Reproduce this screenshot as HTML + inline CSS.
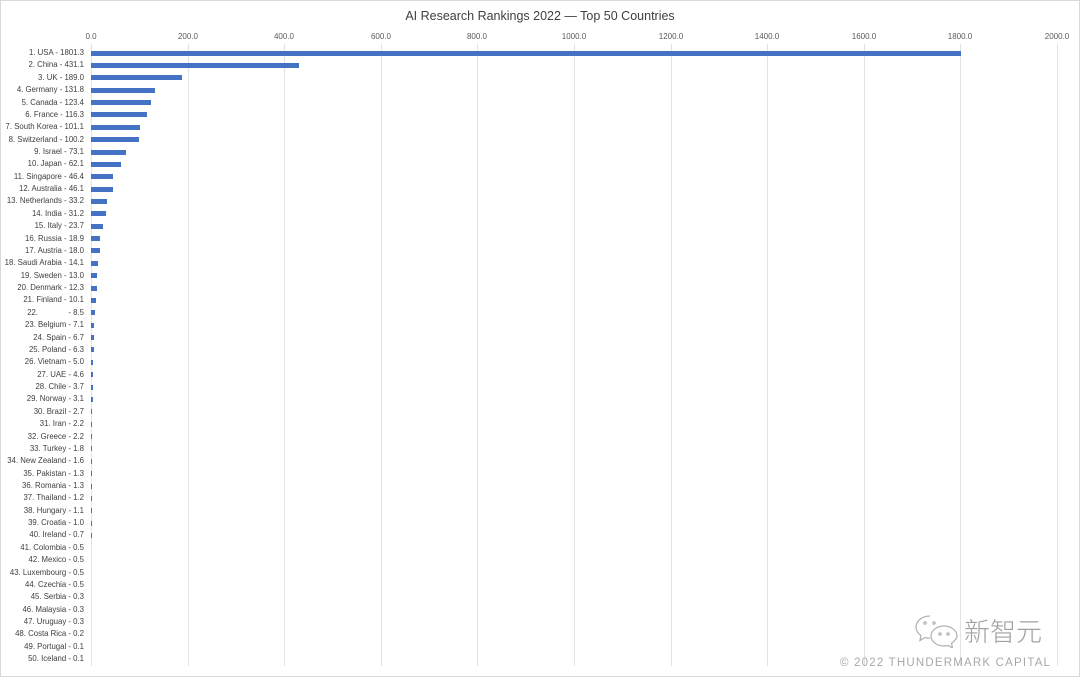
<!DOCTYPE html>
<html><head><meta charset="utf-8"><style>
body{margin:0;width:1080px;height:677px;background:#fff;position:relative;overflow:hidden;font-family:"Liberation Sans",sans-serif;}
.frame{position:absolute;left:0;top:0;width:1078px;height:675px;border:1px solid #d9d9d9;}
.t{position:absolute;top:9px;left:0;width:1080px;text-align:center;font-size:12.5px;color:#404040;}
.g{position:absolute;top:44px;height:622px;width:1px;background:#e3e3e3;}
.ax{position:absolute;top:32px;font-size:8px;color:#595959;width:40px;margin-left:-20px;text-align:center;}
.r{position:absolute;left:0;height:12px;width:1080px;}
.r span{position:absolute;right:996px;top:0;font-size:7.8px;line-height:12px;color:#404040;white-space:nowrap;}
.r i{position:absolute;left:91px;top:3.5px;height:5px;background:#4472c4;}
.wm{position:absolute;left:964px;top:612px;font-family:"Noto Sans CJK SC",sans-serif;font-size:26px;color:#a0a0a0;font-weight:300;}
.cp{position:absolute;left:840px;top:657px;font-size:11.5px;color:#a8a8a8;letter-spacing:1.2px;}
</style></head><body>
<div class="frame"></div>
<div class="t">AI Research Rankings 2022 — Top 50 Countries</div>
<div class="g" style="left:91px"></div><div class="g" style="left:188px"></div><div class="g" style="left:284px"></div><div class="g" style="left:381px"></div><div class="g" style="left:477px"></div><div class="g" style="left:574px"></div><div class="g" style="left:671px"></div><div class="g" style="left:767px"></div><div class="g" style="left:864px"></div><div class="g" style="left:960px"></div><div class="g" style="left:1057px"></div>
<div class="ax" style="left:91px">0.0</div><div class="ax" style="left:188px">200.0</div><div class="ax" style="left:284px">400.0</div><div class="ax" style="left:381px">600.0</div><div class="ax" style="left:477px">800.0</div><div class="ax" style="left:574px">1000.0</div><div class="ax" style="left:671px">1200.0</div><div class="ax" style="left:767px">1400.0</div><div class="ax" style="left:864px">1600.0</div><div class="ax" style="left:960px">1800.0</div><div class="ax" style="left:1057px">2000.0</div>
<div class="r" style="top:47px"><span>1. USA - 1801.3</span><i style="width:870px"></i></div>
<div class="r" style="top:59.4px"><span>2. China - 431.1</span><i style="width:208px"></i></div>
<div class="r" style="top:71.7px"><span>3. UK - 189.0</span><i style="width:91px"></i></div>
<div class="r" style="top:84.1px"><span>4. Germany - 131.8</span><i style="width:64px"></i></div>
<div class="r" style="top:96.5px"><span>5. Canada - 123.4</span><i style="width:60px"></i></div>
<div class="r" style="top:108.9px"><span>6. France - 116.3</span><i style="width:56px"></i></div>
<div class="r" style="top:121.2px"><span>7. South Korea - 101.1</span><i style="width:49px"></i></div>
<div class="r" style="top:133.6px"><span>8. Switzerland - 100.2</span><i style="width:48px"></i></div>
<div class="r" style="top:146px"><span>9. Israel - 73.1</span><i style="width:35px"></i></div>
<div class="r" style="top:158.3px"><span>10. Japan - 62.1</span><i style="width:30px"></i></div>
<div class="r" style="top:170.7px"><span>11. Singapore - 46.4</span><i style="width:22px"></i></div>
<div class="r" style="top:183.1px"><span>12. Australia - 46.1</span><i style="width:22px"></i></div>
<div class="r" style="top:195.4px"><span>13. Netherlands - 33.2</span><i style="width:16px"></i></div>
<div class="r" style="top:207.8px"><span>14. India - 31.2</span><i style="width:15px"></i></div>
<div class="r" style="top:220.2px"><span>15. Italy - 23.7</span><i style="width:11.5px"></i></div>
<div class="r" style="top:232.6px"><span>16. Russia - 18.9</span><i style="width:9px"></i></div>
<div class="r" style="top:244.9px"><span>17. Austria - 18.0</span><i style="width:8.7px"></i></div>
<div class="r" style="top:257.3px"><span>18. Saudi Arabia - 14.1</span><i style="width:6.8px"></i></div>
<div class="r" style="top:269.7px"><span>19. Sweden - 13.0</span><i style="width:6.3px"></i></div>
<div class="r" style="top:282px"><span>20. Denmark - 12.3</span><i style="width:6px"></i></div>
<div class="r" style="top:294.4px"><span>21. Finland - 10.1</span><i style="width:5px"></i></div>
<div class="r" style="top:306.8px"><span>22. &nbsp;&nbsp;&nbsp;&nbsp;&nbsp;&nbsp;&nbsp;&nbsp;&nbsp;&nbsp;&nbsp;&nbsp;&nbsp;- 8.5</span><i style="width:4px"></i></div>
<div class="r" style="top:319.1px"><span>23. Belgium - 7.1</span><i style="width:3.4px"></i></div>
<div class="r" style="top:331.5px"><span>24. Spain - 6.7</span><i style="width:3.2px"></i></div>
<div class="r" style="top:343.9px"><span>25. Poland - 6.3</span><i style="width:3px"></i></div>
<div class="r" style="top:356.3px"><span>26. Vietnam - 5.0</span><i style="width:2.4px"></i></div>
<div class="r" style="top:368.6px"><span>27. UAE - 4.6</span><i style="width:2.2px"></i></div>
<div class="r" style="top:381px"><span>28. Chile - 3.7</span><i style="width:1.8px"></i></div>
<div class="r" style="top:393.4px"><span>29. Norway - 3.1</span><i style="width:1.5px"></i></div>
<div class="r" style="top:405.7px"><span>30. Brazil - 2.7</span><i style="width:1.3px"></i></div>
<div class="r" style="top:418.1px"><span>31. Iran - 2.2</span><i style="width:1.1px"></i></div>
<div class="r" style="top:430.5px"><span>32. Greece - 2.2</span><i style="width:1.1px"></i></div>
<div class="r" style="top:442.8px"><span>33. Turkey - 1.8</span><i style="width:0.9px"></i></div>
<div class="r" style="top:455.2px"><span>34. New Zealand - 1.6</span><i style="width:0.8px"></i></div>
<div class="r" style="top:467.6px"><span>35. Pakistan - 1.3</span><i style="width:0.6px"></i></div>
<div class="r" style="top:480px"><span>36. Romania - 1.3</span><i style="width:0.6px"></i></div>
<div class="r" style="top:492.3px"><span>37. Thailand - 1.2</span><i style="width:0.6px"></i></div>
<div class="r" style="top:504.7px"><span>38. Hungary - 1.1</span><i style="width:0.5px"></i></div>
<div class="r" style="top:517.1px"><span>39. Croatia - 1.0</span><i style="width:0.5px"></i></div>
<div class="r" style="top:529.4px"><span>40. Ireland - 0.7</span><i style="width:0.3px"></i></div>
<div class="r" style="top:541.8px"><span>41. Colombia - 0.5</span></div>
<div class="r" style="top:554.2px"><span>42. Mexico - 0.5</span></div>
<div class="r" style="top:566.5px"><span>43. Luxembourg - 0.5</span></div>
<div class="r" style="top:578.9px"><span>44. Czechia - 0.5</span></div>
<div class="r" style="top:591.3px"><span>45. Serbia - 0.3</span></div>
<div class="r" style="top:603.7px"><span>46. Malaysia - 0.3</span></div>
<div class="r" style="top:616px"><span>47. Uruguay - 0.3</span></div>
<div class="r" style="top:628.4px"><span>48. Costa Rica - 0.2</span></div>
<div class="r" style="top:640.8px"><span>49. Portugal - 0.1</span></div>
<div class="r" style="top:653.1px"><span>50. Iceland - 0.1</span></div>
<svg style="position:absolute;left:914px;top:614px" width="46" height="34" viewBox="0 0 46 34" fill="#fff" stroke="#b0b0b0" stroke-width="1.2">
<path d="M16 2C8 2 2 7 2 13c0 3.5 2 6.5 5 8.5l-1 5 5-3c1.5.5 3 .7 5 .7"/>
<path d="M30 12c-7 0-13 4.5-13 10s6 10 13 10c1.5 0 3-.2 4-.6l4.5 2.5-1-4.5C40 27.5 43 25 43 22c0-5.5-6-10-13-10z"/>
<circle cx="11" cy="9" r="1.2"/><circle cx="20" cy="9" r="1.2"/><circle cx="26" cy="20" r="1.2"/><circle cx="34" cy="20" r="1.2"/>
</svg>
<div class="wm">新智元</div>
<div class="cp">© 2022 THUNDERMARK CAPITAL</div>
</body></html>
